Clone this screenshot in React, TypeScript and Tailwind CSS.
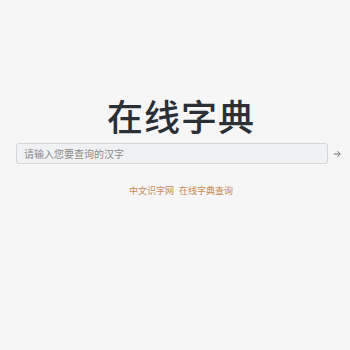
import React from "react";

export default function App() {
  return (
    <div
      className="w-[350px] h-[350px] bg-[#f6f6f6] pt-[93px] pl-[16px] pr-[4px]"
      style={{ fontFamily: '"Noto Sans CJK SC", "Noto Sans", sans-serif' }}
    >
      <div className="flex flex-col items-center">
        <h1 className="text-[36px] leading-[44px] font-medium text-[#2b2f36] tracking-[1px]">在线字典</h1>
        <div className="w-full flex items-center mt-[6px]">
          <div className="flex-1 h-[21px] rounded-[3px] border border-[#d4d4d4] bg-[#f0f1f3] flex items-center px-[7px]">
            <span className="text-[10px] text-[#8a8a8a]">请输入您要查询的汉字</span>
          </div>
          <div className="w-[18px] flex justify-center">
            <svg width="8" height="8" viewBox="0 0 10 10" fill="none" stroke="#666" strokeWidth="1.2">
              <path d="M1 5h8M5.5 1.5L9 5 5.5 8.5" />
            </svg>
          </div>
        </div>
        <div className="mt-[20px] text-[9px] text-[#c58a4f] flex gap-[5px]">
          <span>中文识字网</span>
          <span>在线字典查询</span>
        </div>
      </div>
    </div>
  );
}
